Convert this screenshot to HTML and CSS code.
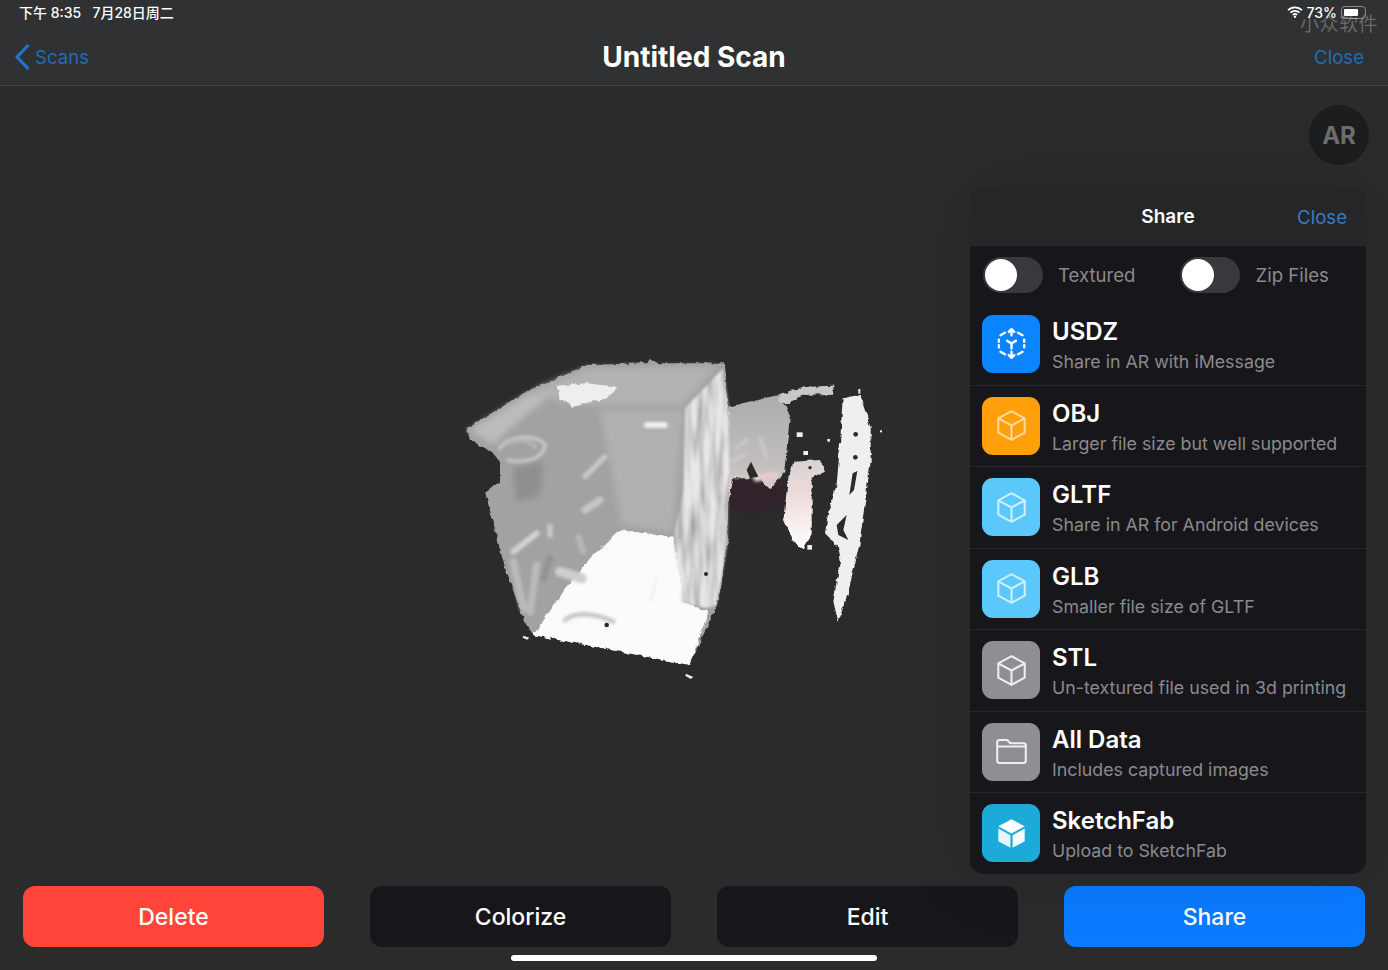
FILE: index.html
```html
<!DOCTYPE html>
<html lang="en">
<head>
    <meta charset="UTF-8">
    <meta name="viewport" content="width=device-width, initial-scale=1.0">
    <title>Untitled Scan</title>
    <link rel="stylesheet" href="styles.css">
</head>
<body>

    <div class="top-bar">
        <div class="status-bar">
            <span class="status-time">下午 8:35&nbsp;&nbsp; 7月28日周二</span>
            <div class="status-right">
                <svg class="wifi" viewBox="0 0 16 12"><path d="M1 4.200a10 10 0 0 1 14 0M3.400 6.700a6.600 6.600 0 0 1 9.200 0M5.800 9a3.200 3.200 0 0 1 4.400 0" fill="none" stroke="#fff" stroke-width="1.700"/><circle cx="8" cy="10.800" r="1.200" fill="#fff"/></svg>
                <span>73%</span>
                <div class="battery"><div class="battery-level"></div></div>
            </div>
            <span class="watermark">小众软件</span>
        </div>
        <div class="nav-bar">
            <div class="nav-back">
                <svg class="chevron" viewBox="0 0 16 26"><path d="M13.500 2 3 13l10.500 11" fill="none" stroke="#1c75d2" stroke-width="3.200" stroke-linecap="round" stroke-linejoin="round"/></svg>
                <span>Scans</span>
            </div>
            <h1>Untitled Scan</h1>
            <span class="nav-close">Close</span>
        </div>
    </div>

    <div class="viewer">
        <!-- scanned mesh, hand traced -->
        <svg class="scan" viewBox="0 0 1320 1035">
            <defs>
                <filter id="rough" x="-5%" y="-5%" width="110%" height="110%">
                    <feTurbulence type="fractalNoise" baseFrequency="0.05" numOctaves="3" seed="4"/>
                    <feDisplacementMap in="SourceGraphic" scale="14" xChannelSelector="R" yChannelSelector="G"/>
                    <feGaussianBlur stdDeviation="1.500"/>
                </filter>
                <filter id="soft" x="-20%" y="-20%" width="140%" height="140%"><feGaussianBlur stdDeviation="9"/></filter>
                <filter id="smudge" x="-20%" y="-20%" width="140%" height="140%"><feGaussianBlur stdDeviation="4"/></filter>
                <filter id="streaks" x="0" y="0" width="100%" height="100%">
                    <feTurbulence type="fractalNoise" baseFrequency="0.05 0.006" numOctaves="2" seed="9"/>
                    <feColorMatrix values="1.500 0 0 0 0.050  1.500 0 0 0 0.050  1.500 0 0 0 0.050  0 0 0 0 1"/>
                    <feComposite in2="SourceGraphic" operator="in"/>
                    <feGaussianBlur stdDeviation="3"/>
                </filter>
                <linearGradient id="rightWall" x1="0" y1="0" x2="0" y2="1">
                    <stop offset="0" stop-color="#acacac"/>
                    <stop offset="0.65" stop-color="#c2bebe"/>
                    <stop offset="1" stop-color="#ecd4d4"/>
                </linearGradient>
                <linearGradient id="blob" x1="0" y1="0" x2="0" y2="1">
                    <stop offset="0" stop-color="#d6d2d2"/>
                    <stop offset="0.4" stop-color="#efdcdc"/>
                    <stop offset="1" stop-color="#fff"/>
                </linearGradient>
            </defs>
            <path d="M835 405 1010 420 1005 480 920 500 835 490Z" fill="#33212a" filter="url(#soft)"/>
            <g filter="url(#rough)">
                <path d="M50 250 240 135 410 60 590 55 600 42 625 55 825 55 838 300 832 600 800 780 720 960 250 870 215 810 160 650 105 440 150 410 150 350 125 320 60 285Z" fill="#a2a2a2"/>
                <path d="M510 555 670 575 700 770 775 800 720 960 250 870 340 740 420 640Z" fill="#fbfbfb"/>
                <path d="M835 185 985 150 1020 210 1003 380 960 432 925 400 850 400 835 470Z" fill="url(#rightWall)"/>
                <path d="M985 148 1060 126 1150 122 1150 146 1060 150 1012 178 990 170Z" fill="#c8c8c8"/>
                <path d="M1030 350 1110 345 1125 380 1085 400 1085 570 1060 612 1030 590 1000 520 1015 400Z" fill="url(#blob)"/>
                <path d="M1178 160 1230 150 1262 250 1262 350 1248 450 1228 600 1195 740 1165 830 1150 770 1170 650 1160 600 1125 565 1135 500 1160 420 1170 300Z" fill="#efefef"/>
            </g>
            <!-- soft shading on the walls -->
            <g filter="url(#soft)">
                <path d="M250 135 410 70 800 65 700 180 440 180 330 170Z" fill="#b2b2b2"/>
                <path d="M450 195 700 195 670 560 515 540Z" fill="#b0b0b0"/>
                <path d="M60 255 240 145 300 150 170 260 130 300Z" fill="#bcbcbc"/>
                <path d="M190 370 280 350 270 450 200 470Z" fill="#8e8e8e"/>
            </g>
            <g filter="url(#smudge)" fill="none" stroke-linecap="round">
                <path d="M150 310C170 270 260 265 285 300 280 345 220 355 175 345" stroke="#c6c6c6" stroke-width="11"/>
                <path d="M175 295C200 280 240 285 255 305" stroke="#b5b5b5" stroke-width="12"/>
                <path d="M405 395 465 335" stroke="#c8c8c8" stroke-width="16"/>
                <path d="M405 495 450 465" stroke="#c6c6c6" stroke-width="22"/>
                <path d="M190 620 260 565" stroke="#d2d2d2" stroke-width="18"/>
                <path d="M300 545V570" stroke="#c6c6c6" stroke-width="18"/>
                <path d="M385 575 400 620" stroke="#b6b6b6" stroke-width="18"/>
                <path d="M190 650 220 790M260 660 240 800" stroke="#bababa" stroke-width="22"/>
                <path d="M280 700 300 640" stroke="#939393" stroke-width="20"/>
                <path d="M330 680 395 700" stroke="#cecece" stroke-width="30"/>
                <path d="M345 825C380 795 450 810 490 830" stroke="#c8c8c8" stroke-width="14"/>
                <path d="M590 240H645" stroke="#f5f5f5" stroke-width="16"/>
                <path d="M860 310 890 285M930 280 950 335M845 350 880 330" stroke="#c8c8c8" stroke-width="12"/>
                <path d="M820 400 810 440M920 400 975 390" stroke="#e8cccc" stroke-width="20"/>
                <path d="M620 700 600 770" stroke="#eee" stroke-width="6"/>
            </g>
            <g filter="url(#rough)">
                <path d="M320 122 410 115 500 125 470 160 370 185 330 160Z" fill="#eee"/>
            </g>
            <!-- ragged corner between the walls -->
            <path d="M705 190 820 70 835 180 838 300 832 600 800 780 770 790 690 770 670 580 700 440Z" fill="#fff" opacity="0.75" filter="url(#streaks)"/>
            <g fill="#2b2b2c">
                <path d="M1190 510 1180 555 1195 585 1165 570 1160 540Z"/>
                <path d="M1208 385 1222 378 1212 435 1198 450Z"/>
                <path d="M890 375 903 350 925 395 900 400Z"/>
                <circle cx="1217" cy="268" r="7"/><circle cx="1216" cy="337" r="7"/><circle cx="1080" cy="368" r="5"/>
                <circle cx="470" cy="840" r="7"/><circle cx="768" cy="687" r="6"/>
            </g>
            <g fill="#eee">
                <rect x="1040" y="262" width="18" height="14"/><rect x="1060" y="318" width="14" height="12"/><rect x="1072" y="600" width="14" height="14"/>
                <rect x="1132" y="282" width="8" height="8"/><rect x="1225" y="132" width="6" height="14"/><rect x="1290" y="256" width="6" height="6"/>
                <path d="M220 872 238 878 232 884 218 878Z"/><path d="M708 986 730 996 722 1002 706 992Z"/>
            </g>
        </svg>

        <div class="ar-button">AR</div>

        <div class="share-panel">
            <div class="panel-head">
                <span class="panel-title">Share</span>
                <span class="panel-close">Close</span>
            </div>
            <div class="toggle-row">
                <div class="toggle-item">
                    <div class="toggle"><div class="knob"></div></div>
                    <span>Textured</span>
                </div>
                <div class="toggle-item">
                    <div class="toggle"><div class="knob"></div></div>
                    <span>Zip Files</span>
                </div>
            </div>
            <div class="format-row first">
                <div class="format-icon blue">
                    <svg viewBox="0 0 30 30" fill="none" stroke="#fff" stroke-width="2.200" stroke-linecap="round" stroke-linejoin="round">
                        <path d="M3.500 11.500v2M3.500 16.500v2M26.500 11.500v2M26.500 16.500v2"/>
                        <path d="M5 7.500 9 5.200M25 7.500 21 5.200M5 22.500 9 24.800M25 22.500 21 24.800"/>
                        <path d="M15 2.500v5M12.500 4.500 15 2l2.500 2.500M15 27.500v-5M12.500 25.500 15 28l2.500-2.500"/>
                        <path d="M15 15v4.500M15 15l-4-2.500M15 15l4-2.500"/>
                    </svg>
                </div>
                <div class="format-text"><strong>USDZ</strong><span>Share in AR with iMessage</span></div>
            </div>
            <div class="format-row">
                <div class="format-icon orange">
                    <svg viewBox="0 0 30 30" class="cube"><path d="M15 2 27 8.500v13L15 28 3 21.500v-13ZM3 8.500 15 15l12-6.500M15 15v13"/></svg>
                </div>
                <div class="format-text"><strong>OBJ</strong><span>Larger file size but well supported</span></div>
            </div>
            <div class="format-row">
                <div class="format-icon sky">
                    <svg viewBox="0 0 30 30" class="cube"><path d="M15 2 27 8.500v13L15 28 3 21.500v-13ZM3 8.500 15 15l12-6.500M15 15v13"/></svg>
                </div>
                <div class="format-text"><strong>GLTF</strong><span>Share in AR for Android devices</span></div>
            </div>
            <div class="format-row">
                <div class="format-icon sky">
                    <svg viewBox="0 0 30 30" class="cube"><path d="M15 2 27 8.500v13L15 28 3 21.500v-13ZM3 8.500 15 15l12-6.500M15 15v13"/></svg>
                </div>
                <div class="format-text"><strong>GLB</strong><span>Smaller file size of GLTF</span></div>
            </div>
            <div class="format-row">
                <div class="format-icon gray">
                    <svg viewBox="0 0 30 30" class="cube"><path d="M15 2 27 8.500v13L15 28 3 21.500v-13ZM3 8.500 15 15l12-6.500M15 15v13"/></svg>
                </div>
                <div class="format-text"><strong>STL</strong><span>Un-textured file used in 3d printing</span></div>
            </div>
            <div class="format-row">
                <div class="format-icon gray">
                    <svg viewBox="0 0 30 30" class="cube"><path d="M2 6.500a2 2 0 0 1 2-2h7l3 3h12a2 2 0 0 1 2 2v14a2 2 0 0 1-2 2H4a2 2 0 0 1-2-2ZM2 10.500h26"/></svg>
                </div>
                <div class="format-text"><strong>All Data</strong><span>Includes captured images</span></div>
            </div>
            <div class="format-row">
                <div class="format-icon teal">
                    <svg viewBox="0 0 30 30"><path d="M15 2 27 8.500 15 15 3 8.500Z" fill="#fff"/><path d="M3 10.500 14 16.500V28L3 22Z" fill="#e4f7fd"/><path d="M27 10.500 16 16.500V28l11-6Z" fill="#f4fcff"/></svg>
                </div>
                <div class="format-text"><strong>SketchFab</strong><span>Upload to SketchFab</span></div>
            </div>
        </div>
    </div>

    <div class="actions">
        <div class="action-btn delete">Delete</div>
        <div class="action-btn">Colorize</div>
        <div class="action-btn">Edit</div>
        <div class="action-btn share">Share</div>
    </div>

    <div class="home-row"><div class="home-indicator"></div></div>

</body>
</html>
```

FILE: styles.css
```css
* {
    margin: 0;
    padding: 0;
    box-sizing: border-box;
}

body {
    display: flex;
    flex-direction: column;
    height: 100vh;
    background-color: #2b2b2c;
    color: #fff;
    font-family: 'Inter', 'Noto Sans CJK SC', sans-serif;
    overflow: hidden;
}

.top-bar {
    background-color: #2f3132;
    border-bottom: 1px solid #434546;
    height: 86px;
}

.status-bar {
    position: relative;
    display: flex;
    justify-content: space-between;
    align-items: center;
    height: 26px;
    padding: 0 22px 2px 19px;
    font-size: 14px;
    font-weight: 500;
}

.status-right {
    display: flex;
    align-items: center;
    gap: 4px;
}

.wifi {
    width: 16px;
    height: 12px;
}

.battery {
    width: 25px;
    height: 13px;
    padding: 2px;
    border: 1px solid #8a8b8c;
    border-radius: 4px;
}

.battery-level {
    width: 73%;
    height: 100%;
    background-color: #fff;
    border-radius: 1px;
}

.watermark {
    position: absolute;
    top: 9px;
    right: 10px;
    font-size: 19px;
    font-weight: 400;
    color: rgba(255, 255, 255, 0.28);
    letter-spacing: 0.5px;
}

.nav-bar {
    position: relative;
    display: flex;
    justify-content: space-between;
    align-items: center;
    height: 59px;
    padding: 3px 24px 0 14px;
}

.nav-back {
    display: flex;
    align-items: center;
    gap: 5px;
    font-size: 18.600px;
    color: #1f6db8;
}

.chevron {
    width: 16px;
    height: 26px;
}

.nav-bar h1 {
    position: absolute;
    left: 0;
    right: 0;
    text-align: center;
    font-size: 28px;
    font-weight: 700;
    pointer-events: none;
}

.nav-close {
    font-size: 18.600px;
    color: #1f6db8;
}

.viewer {
    position: relative;
    flex: 1;
}

.scan {
    position: absolute;
    left: 450px;
    top: 259px;
    width: 440px;
    height: 345px;
}

.ar-button {
    position: absolute;
    top: 19px;
    left: 1309px;
    display: flex;
    justify-content: center;
    align-items: center;
    width: 60px;
    height: 60px;
    background-color: #1c1d1e;
    border-radius: 50%;
    color: #6d6e6f;
    font-size: 24px;
    font-weight: 700;
}

.share-panel {
    position: absolute;
    top: 101px;
    left: 970px;
    width: 396px;
    background-color: #17171b;
    border-radius: 14px;
    overflow: hidden;
    box-shadow: 0 0 70px rgba(0, 0, 0, 0.12);
}

.panel-head {
    position: relative;
    display: flex;
    justify-content: flex-end;
    align-items: center;
    height: 59px;
    padding-right: 19px;
    background-color: #252627;
}

.panel-title {
    position: absolute;
    left: 0;
    right: 0;
    text-align: center;
    font-size: 19px;
    font-weight: 600;
}

.panel-close {
    font-size: 18.600px;
    color: #3b7ac9;
}

.toggle-row {
    display: flex;
    gap: 45px;
    height: 57px;
    padding: 11px 0 0 13px;
}

.toggle-item {
    display: flex;
    align-items: center;
    gap: 15px;
    height: 36px;
    font-size: 18.600px;
    color: #8a8a8e;
}

.toggle {
    width: 60px;
    height: 36px;
    padding: 2px;
    background-color: #39393d;
    border-radius: 18px;
}

.knob {
    width: 32px;
    height: 32px;
    background-color: #fff;
    border-radius: 50%;
}

.format-row {
    display: flex;
    align-items: center;
    gap: 12px;
    height: 81.500px;
    padding: 0 0 0 12px;
    border-top: 1px solid #28282b;
}

.format-row.first {
    border-top: none;
}

.format-icon {
    display: flex;
    justify-content: center;
    align-items: center;
    flex-shrink: 0;
    width: 58px;
    height: 58px;
    border-radius: 11px;
}

.format-icon svg {
    width: 33px;
    height: 33px;
}

.format-icon .cube path {
    fill: none;
    stroke: rgba(255, 255, 255, 0.85);
    stroke-width: 1.900;
    stroke-linejoin: round;
}

.format-icon.orange .cube path {
    stroke: rgba(255, 255, 255, 0.6);
}

.format-icon.sky .cube path {
    stroke: rgba(255, 255, 255, 0.7);
}

.blue { background-color: #0a84ff; }
.orange { background-color: #ff9f0a; }
.sky { background-color: #5ac8fa; }
.gray { background-color: #8e8e93; }
.teal { background-color: #1caad9; }

.format-text {
    display: flex;
    flex-direction: column;
    gap: 4px;
    padding-top: 2px;
}

.format-text strong {
    font-size: 24px;
    font-weight: 600;
    line-height: 29px;
}

.format-text span {
    font-size: 17.800px;
    line-height: 23px;
    color: #8a8a8e;
    white-space: nowrap;
}

.actions {
    display: grid;
    grid-template-columns: repeat(4, 1fr);
    gap: 46px;
    padding: 0 23px;
}

.action-btn {
    display: flex;
    justify-content: center;
    align-items: center;
    height: 61px;
    background-color: #17171b;
    border-radius: 12px;
    font-size: 23px;
    font-weight: 500;
}

.action-btn.delete {
    background-color: #ff453a;
}

.action-btn.share {
    background-color: #0a7aff;
}

.home-row {
    display: flex;
    justify-content: center;
    height: 23px;
    padding-top: 8px;
}

.home-indicator {
    width: 366px;
    height: 6px;
    background-color: #fff;
    border-radius: 3px;
}
```
